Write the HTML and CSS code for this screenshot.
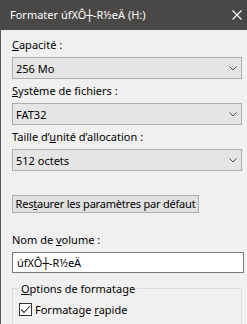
FILE: index.html
```html
<!DOCTYPE html>
<html lang="fr">
<head>
    <meta charset="UTF-8">
    <meta name="viewport" content="width=device-width, initial-scale=1.0">
    <title>Formater</title>
    <link rel="stylesheet" href="styles.css">
</head>
<body>

    <div class="titlebar">
        <span class="title">Formater úfXÔ┼-R½eÄ (H:)</span>
        <svg class="close" width="10" height="10" viewBox="0 0 10 10">
            <path d="M0.5 0.5 L9.5 9.5 M9.5 0.5 L0.5 9.5" stroke="#fff" stroke-width="1.1" fill="none"/>
        </svg>
    </div>

    <div class="panel">
        <div class="field">
            <label class="label"><u>C</u>apacité :</label>
            <div class="combo">
                <span>256 Mo</span>
                <svg class="chevron" width="8" height="5" viewBox="0 0 8 5"><polyline points="0.5,0.5 4,4 7.5,0.5" fill="none" stroke="#505050" stroke-width="1"/></svg>
            </div>
        </div>

        <div class="field">
            <label class="label"><u>S</u>ystème de fichiers :</label>
            <div class="combo">
                <span>FAT32</span>
                <svg class="chevron" width="8" height="5" viewBox="0 0 8 5"><polyline points="0.5,0.5 4,4 7.5,0.5" fill="none" stroke="#505050" stroke-width="1"/></svg>
            </div>
        </div>

        <div class="field">
            <label class="label">Taille d’<u>u</u>nité d’allocation :</label>
            <div class="combo">
                <span>512 octets</span>
                <svg class="chevron" width="8" height="5" viewBox="0 0 8 5"><polyline points="0.5,0.5 4,4 7.5,0.5" fill="none" stroke="#505050" stroke-width="1"/></svg>
            </div>
        </div>

        <button class="restore">Res<u>t</u>aurer les paramètres par défaut</button>

        <div class="field volume">
            <label class="label">Nom de <u>v</u>olume :</label>
            <div class="textbox">úfXÔ┼-R½eÄ</div>
        </div>

        <fieldset class="group">
            <legend><u>O</u>ptions de formatage</legend>
            <label class="check">
                <span class="box">
                    <svg width="11" height="11" viewBox="0 0 11 11"><polyline points="1,5.5 4,8.5 10,2" fill="none" stroke="#333" stroke-width="1.1"/></svg>
                </span>
                <span>Formatage <u>r</u>apide</span>
            </label>
        </fieldset>
    </div>

</body>
</html>
```

FILE: styles.css
```css
body {
    margin: 0;
    width: 247px;
    height: 324px;
    overflow: hidden;
    background-color: #f0f0f0;
    font-family: "Noto Sans", "DejaVu Sans", sans-serif;
    font-size: 11px;
    color: #000;
    white-space: nowrap;
}
.titlebar {
    height: 30px;
    background-color: #4a4846;
    color: #fff;
    display: flex;
    align-items: center;
    justify-content: space-between;
    padding: 0 5px 0 10px;
}
.title {
    line-height: 16px;
}
.close {
    display: block;
    margin-top: -1px;
}
.panel {
    height: 294px;
    border-left: 1px solid #5a5a5a;
    padding: 7px 0 0 11px;
    display: flex;
    flex-direction: column;
    align-items: flex-start;
}
.field {
    display: flex;
    flex-direction: column;
    margin-bottom: 4px;
}
.label {
    height: 16px;
    line-height: 16px;
    margin-bottom: 4px;
}
.combo {
    box-sizing: border-box;
    width: 230px;
    height: 22px;
    background-color: #e5e5e5;
    border: 1px solid #adadad;
    display: flex;
    align-items: center;
    justify-content: space-between;
    padding: 0 4px 0 3px;
}
.chevron {
    display: block;
}
.restore {
    box-sizing: border-box;
    margin: 20px 0 0 0;
    width: 187px;
    height: 21px;
    padding: 0;
    background-color: #e1e1e1;
    border: 1px solid #adadad;
    font-family: inherit;
    font-size: 11px;
    letter-spacing: -0.2px;
    color: #000;
}
.volume {
    margin-top: 19px;
}
.textbox {
    box-sizing: border-box;
    width: 232px;
    height: 21px;
    background-color: #fff;
    border: 1px solid #7a7a7a;
    padding: 0 4px;
    line-height: 19px;
}
.group {
    box-sizing: border-box;
    width: 230px;
    height: 60px;
    margin: 4px 0 0 0;
    padding: 5px 0 0 6px;
    border: 1px solid #dcdcdc;
}
.group legend {
    padding: 0 2px;
    line-height: 16px;
}
.check {
    display: flex;
    align-items: center;
    gap: 3px;
}
.box {
    box-sizing: border-box;
    width: 13px;
    height: 13px;
    border: 1px solid #333;
    background-color: #fff;
    display: flex;
    align-items: center;
    justify-content: center;
}
.box svg {
    display: block;
}
```
